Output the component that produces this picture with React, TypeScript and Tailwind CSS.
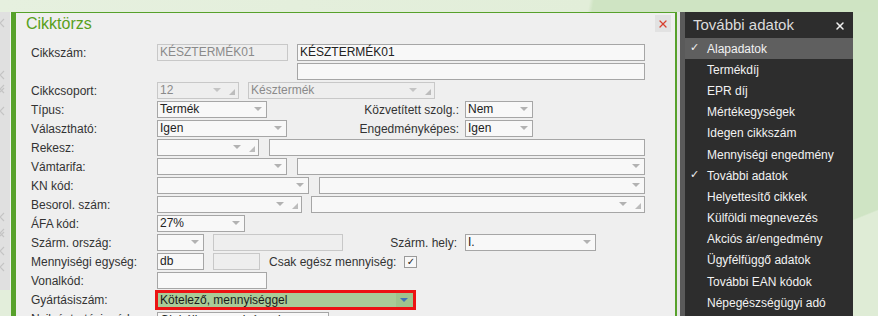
import { X } from "lucide-react";

type FieldProps = {
  className?: string;
  value?: string;
  disabled?: boolean;
  arrow?: boolean;
  corner?: boolean;
};

function Field({ className = "", value, disabled, arrow, corner }: FieldProps) {
  return (
    <div
      className={`relative h-[17px] shrink-0 border ${
        disabled
          ? "border-[#c8c8c8] bg-[#eeeeee] text-[#8a8a8a]"
          : "border-[#a6a6a6] bg-[#f8f8f8] text-[#222]"
      } ${className}`}
    >
      <span className="absolute left-[2px] top-0 whitespace-nowrap text-[12px] leading-[15px]">{value}</span>
      {arrow && (
        <span
          className={`absolute top-[5px] h-0 w-0 border-x-[4px] border-t-[4px] border-x-transparent ${
            disabled ? "border-t-[#c4c4c4]" : "border-t-[#b2b2b2]"
          } ${corner ? "right-[17px]" : "right-[4px]"}`}
        />
      )}
      {corner && (
        <span className="absolute bottom-[3px] right-[3px] h-0 w-0 border-b-[6px] border-l-[6px] border-b-[#bcbcbc] border-l-transparent" />
      )}
    </div>
  );
}

function Row({ label, children }: { label?: string; children?: React.ReactNode }) {
  return (
    <div className="flex h-[19px] items-center">
      <div className="w-[126px] shrink-0 whitespace-nowrap">{label}</div>
      {children}
    </div>
  );
}

function SideLabel({ className, text }: { className: string; text: string }) {
  return <div className={`shrink-0 whitespace-nowrap text-right ${className}`}>{text}</div>;
}

function Chev({ double }: { double?: boolean }) {
  return (
    <svg width="8" height="10" viewBox="0 0 8 10" className="-ml-[2px]">
      <polyline points="6,1 2,5 6,9" fill="none" stroke="#c4c4c4" strokeWidth="1.2" />
      {double && <polyline points="6,4 2,8" fill="none" stroke="#c4c4c4" strokeWidth="1.2" />}
    </svg>
  );
}

function LeftStrip() {
  return (
    <div className="flex w-[11px] shrink-0 flex-col">
      <div className="flex h-[278px] flex-col border-r border-[#f3f3f3] bg-[#e0e0e0]">
        <div className="mt-[6px]"><Chev /></div>
        <div className="mt-[42px]"><Chev /></div>
        <div className="mt-[4px]"><Chev double /></div>
        <div className="mt-[12px]"><Chev /></div>
        <div className="mt-[96px]"><Chev /></div>
        <div className="mt-[6px]"><Chev double /></div>
        <div className="mt-[8px]"><Chev /></div>
        <div className="mt-[6px]"><Chev /></div>
      </div>
    </div>
  );
}

const items = [
  "Alapadatok",
  "Termékdíj",
  "EPR díj",
  "Mértékegységek",
  "Idegen cikkszám",
  "Mennyiségi engedmény",
  "További adatok",
  "Helyettesítő cikkek",
  "Külföldi megnevezés",
  "Akciós ár/engedmény",
  "Ügyfélfüggő adatok",
  "További EAN kódok",
  "Népegészségügyi adó",
];

function Panel() {
  return (
    <div className="flex w-[173px] shrink-0 flex-col border-l-[5px] border-[#5a5a5a] bg-[#2d2d2d] text-[#f2f2f2]">
      <div className="flex h-[26px] items-center justify-between pl-[8px] pr-[7px] pt-[1px]">
        <span className="text-[15px] text-[#dcdcdc]">További adatok</span>
        <X size={12} strokeWidth={3} color="#f0f0f0" />
      </div>
      {items.map((t, i) => (
        <div
          key={t}
          className={`flex h-[21.2px] items-center ${i === 0 ? "bg-[#5f5f5f]" : ""}`}
        >
          <span className="w-[22px] shrink-0 pl-[5px] font-['DejaVu_Sans',sans-serif] text-[11px]">
            {i === 0 || i === 6 ? "✓" : ""}
          </span>
          <span className="whitespace-nowrap text-[12px]">{t}</span>
        </div>
      ))}
    </div>
  );
}

function Dialog() {
  return (
    <div className="w-[666px] shrink-0 border-l-[5px] border-r-[2px] border-t border-[#57a12b] bg-[#efefef]">
      <div className="flex h-[30px] items-start justify-between pl-[10px] pr-[4px]">
        <span className="pt-[3px] text-[16px] leading-[16px] text-[#58a01c]">Cikktörzs</span>
        <div className="mt-[2px] flex h-[17px] w-[16px] items-center justify-center bg-[#e2e2e2]">
          <X size={12} strokeWidth={2.5} color="#d8402f" />
        </div>
      </div>
      <div className="pl-[15px]">
        <Row label="Cikkszám:">
          <Field className="w-[131px]" value="KÉSZTERMÉK01" disabled />
          <Field className="ml-[9px] w-[348px]" value="KÉSZTERMÉK01" />
        </Row>
        <Row>
          <Field className="ml-[140px] w-[348px]" />
        </Row>
        <Row label="Cikkcsoport:">
          <Field className="w-[82px]" value="12" disabled arrow corner />
          <Field className="ml-[9px] w-[187px]" value="Késztermék" disabled arrow corner />
        </Row>
        <Row label="Típus:">
          <Field className="w-[110px]" value="Termék" arrow />
          <SideLabel className="w-[198px] pr-[6px]" text="Közvetített szolg.:" />
          <Field className="w-[68px]" value="Nem" arrow />
        </Row>
        <Row label="Választható:">
          <Field className="w-[130px]" value="Igen" arrow />
          <SideLabel className="w-[178px] pr-[6px]" text="Engedményképes:" />
          <Field className="w-[68px]" value="Igen" arrow />
        </Row>
        <Row label="Rekesz:">
          <Field className="w-[102px]" arrow corner />
          <Field className="ml-[10px] w-[376px]" />
        </Row>
        <Row label="Vámtarifa:">
          <Field className="w-[130px]" arrow />
          <Field className="ml-[10px] w-[348px]" arrow />
        </Row>
        <Row label="KN kód:">
          <Field className="w-[152px]" arrow />
          <Field className="ml-[10px] w-[326px]" arrow />
        </Row>
        <Row label="Besorol. szám:">
          <Field className="w-[145px]" arrow corner />
          <Field className="ml-[9px] w-[334px]" arrow corner />
        </Row>
        <Row label="ÁFA kód:">
          <Field className="w-[88px]" value="27%" arrow />
        </Row>
        <Row label="Szárm. ország:">
          <Field className="w-[47px]" arrow />
          <Field className="ml-[9px] w-[130px]" disabled />
          <SideLabel className="w-[122px] pr-[8px]" text="Szárm. hely:" />
          <Field className="w-[131px]" value="I." arrow />
        </Row>
        <Row label="Mennyiségi egység:">
          <Field className="w-[47px]" value="db" />
          <Field className="ml-[9px] w-[47px]" disabled />
          <span className="ml-[9px] whitespace-nowrap">Csak egész mennyiség:</span>
          <div className="ml-[8px] flex h-[12px] w-[13px] items-center justify-center border border-[#9a9a9a] bg-[#f8f8f8] font-['DejaVu_Sans',sans-serif] text-[10px] leading-none text-[#222]">
            ✓
          </div>
        </Row>
        <Row label="Vonalkód:">
          <Field className="w-[110px]" />
        </Row>
        <Row label="Gyártásiszám:">
          <div className="-ml-[2px] flex h-[20px] w-[261px] shrink-0 border-[3px] border-[#ec1313] bg-[#a9cc98]">
            <span className="flex-1 pl-[2px] text-[12px] leading-[14px] text-[#1a1a1a]">Kötelező, mennyiséggel</span>
            <div className="relative w-[17px] bg-[#9fc48e]">
              <span className="absolute left-[4px] top-[5px] h-0 w-0 border-x-[4px] border-t-[4px] border-x-transparent border-t-[#3f74b6]" />
            </div>
          </div>
        </Row>
        <Row label="Nyilvántartási mód:">
          <Field className="mt-[3px] w-[172px]" value="Globális mennyiséggel" />
        </Row>
      </div>
    </div>
  );
}

export default function App() {
  return (
    <div className="h-[316px] w-[878px] overflow-hidden bg-[#e3eedb] font-['Liberation_Sans',Arial,sans-serif] text-[12px] text-[#333]">
      <div className="h-[12px] bg-[linear-gradient(100deg,#e6f0df_0%,#e2eed9_67%,#cfe4c3_67.5%,#cfe4c3_100%)]" />
      <div className="flex h-[304px]">
        <LeftStrip />
        <Dialog />
        <div className="w-[3px] shrink-0 bg-[#e6e6e6]" />
        <Panel />
        <div className="flex-1 bg-[linear-gradient(158deg,#cfe4c4_0%,#cfe4c4_66%,#dfecd6_66.5%,#dfecd6_100%)]" />
      </div>
    </div>
  );
}
